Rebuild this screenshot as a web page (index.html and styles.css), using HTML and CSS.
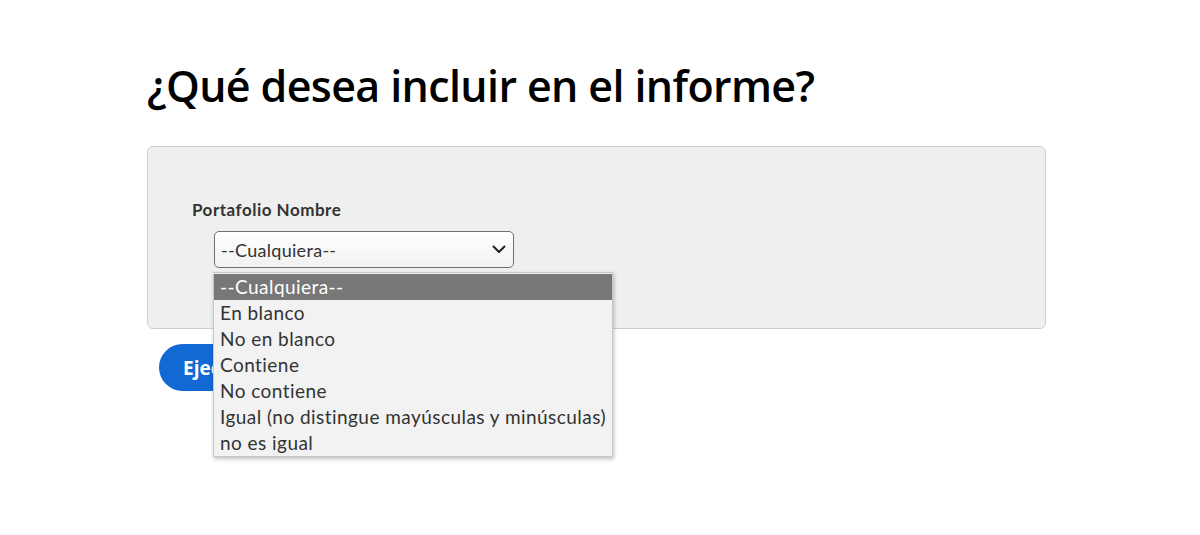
FILE: index.html
```html
<!DOCTYPE html>
<html lang="es">
<head>
<meta charset="utf-8">
<link rel="stylesheet" href="styles.css">
</head>
<body>
<main class="page">
  <h1 class="title">¿Qué desea incluir en el informe?</h1>
  <section class="panel">
    <div class="field">
      <label class="field-label">Portafolio Nombre</label>
      <div class="select-wrap">
        <div class="select">
          <span class="select-value">--Cualquiera--</span>
          <svg class="chevron" width="14" height="9" viewBox="0 0 14 9"><path d="M1.5 1.5 L7 7 L12.5 1.5" fill="none" stroke="#222" stroke-width="2" stroke-linecap="round" stroke-linejoin="round"/></svg>
        </div>
        <ul class="listbox">
          <li class="option selected">--Cualquiera--</li>
          <li class="option">En blanco</li>
          <li class="option">No en blanco</li>
          <li class="option">Contiene</li>
          <li class="option">No contiene</li>
          <li class="option">Igual (no distingue mayúsculas y minúsculas)</li>
          <li class="option">no es igual</li>
        </ul>
      </div>
    </div>
  </section>
  <div class="actions">
    <button class="run-btn">Ejecutar informe</button>
  </div>
</main>
</body>
</html>
```
FILE: styles.css
```css
html, body {
  margin: 0;
  padding: 0;
  background: #fff;
}
body {
  min-height: 535px;
  font-family: "Lato", "Liberation Sans", sans-serif;
  color: #222;
}
.page {
  width: 899px;
  margin: 0 0 0 147px;
  padding-top: 60px;
  min-height: 475px;
}
.title {
  margin: 0 0 34px 0;
  font-family: "Open Sans", sans-serif;
  font-weight: 600;
  font-size: 43px;
  line-height: 52px;
  color: #000;
  letter-spacing: -0.62px;
}
.panel {
  box-sizing: border-box;
  height: 183px;
  background: #efefef;
  border: 1px solid #cfcfcf;
  border-radius: 6px;
  padding: 52px 0 0 44px;
}
.field-label {
  display: block;
  font-family: "Lato", sans-serif;
  font-weight: 700;
  font-size: 17px;
  line-height: 22px;
  letter-spacing: 0.5px;
  color: #333;
}
.select-wrap {
  position: relative;
  margin: 10px 0 0 22px;
  width: 300px;
}
.select {
  box-sizing: border-box;
  height: 37px;
  border: 1px solid #6f6f6f;
  border-radius: 5px;
  background: linear-gradient(#ffffff, #f1f1f1);
  display: flex;
  align-items: center;
  justify-content: space-between;
  padding: 0 7px 0 6px;
}
.select-value {
  font-family: "Lato", sans-serif;
  font-size: 18px;
  letter-spacing: 0.3px;
  color: #333;
}
.chevron {
  display: block;
}
.listbox {
  position: absolute;
  top: 41px;
  left: -1px;
  width: 400px;
  margin: 0;
  padding: 1px 0 0 0;
  list-style: none;
  background: #f2f2f2;
  border: 1px solid #c8c8c8;
  box-shadow: 1px 2px 4px rgba(0,0,0,0.25);
  z-index: 2;
  box-sizing: border-box;
}
.option {
  height: 26px;
  line-height: 26px;
  padding-left: 6px;
  font-family: "Lato", sans-serif;
  font-size: 19px;
  letter-spacing: 0.45px;
  color: #333;
  white-space: nowrap;
}
.option.selected {
  background: #777;
  color: #fff;
}
.actions {
  padding: 15px 0 0 12px;
}
.run-btn {
  height: 47px;
  padding: 0 24px;
  border: none;
  border-radius: 24px;
  background: #1269d3;
  color: #fff;
  font-family: "Open Sans", sans-serif;
  font-weight: 700;
  font-size: 19px;
}
```
